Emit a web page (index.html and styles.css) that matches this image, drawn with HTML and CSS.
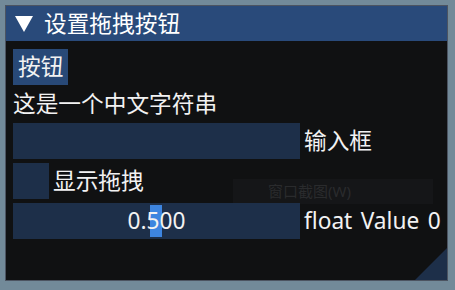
FILE: index.html
```html
<!DOCTYPE html>
<html lang="zh-CN">
<head>
<meta charset="utf-8">
<title>设置拖拽按钮</title>
<link rel="stylesheet" href="styles.css">
</head>
<body>
<div class="window">
  <div class="titlebar">
    <span class="arrow"></span>
    <span class="title">设置拖拽按钮</span>
  </div>
  <div class="content">
    <div class="row"><div class="button">按钮</div></div>
    <div class="row text">这是一个中文字符串</div>
    <div class="row"><div class="frame wide"></div><span class="label">输入框</span></div>
    <div class="row"><div class="frame check"></div><span class="label">显示拖拽</span></div>
    <div class="row slider-row">
      <div class="frame wide slider">
        <div class="grab" style="left:137px"></div>
        <span class="value">0.500</span>
      </div>
      <span class="label latin">float Value 0</span>
    </div>
  </div>
  <div class="ghost"><span>窗口截图(W)</span></div>
  <div class="grip"></div>
</div>
</body>
</html>
```
FILE: styles.css
```css
html, body {
  margin: 0;
  padding: 0;
  background: #728a99;
  width: 455px;
  height: 290px;
  overflow: hidden;
}
body {
  font-family: "Noto Sans", "Noto Sans CJK SC", sans-serif;
  color: #f2f2f2;
  font-size: 22.7px;
}
.window {
  position: relative;
  margin: 5px 0 0 5px;
  width: 443px;
  height: 276px;
  box-sizing: border-box;
  border: 1px solid #4c5461;
  background: #101112;
}
.titlebar {
  height: 35px;
  background: #294a7a;
  display: flex;
  align-items: center;
  padding-left: 9px;
}
.arrow {
  width: 0;
  height: 0;
  border-left: 9.5px solid transparent;
  border-right: 9.5px solid transparent;
  border-top: 16px solid #ffffff;
  margin-right: 11px;
  margin-top: 1px;
}
.title {
  line-height: 35px;
  color: #ffffff;
}
.content {
  padding: 8px 7px;
  display: flex;
  flex-direction: column;
  gap: 4px;
}
.row {
  display: flex;
  align-items: center;
  gap: 4px;
}
.text {
  height: 30px;
  line-height: 30px;
}
.button {
  height: 36px;
  line-height: 36px;
  padding: 0 5px;
  background: #284977;
}
.frame {
  height: 36px;
  background: #1d2f49;
  flex-shrink: 0;
}
.wide {
  width: 287px;
}
.check {
  width: 36px;
}
.label {
  line-height: 36px;
  white-space: nowrap;
  flex-shrink: 0;
}
.latin {
  word-spacing: 2.5px;
}
.slider-row {
  position: relative;
  z-index: 1;
}
.slider {
  position: relative;
  display: flex;
  justify-content: center;
  align-items: center;
}
.grab {
  position: absolute;
  top: 2px;
  width: 12px;
  height: 32px;
  background: #3d85e0;
}
.value {
  position: relative;
  line-height: 36px;
}
.ghost {
  position: absolute;
  left: 227px;
  top: 173px;
  width: 200px;
  height: 25px;
  background: #151618;
  color: #2a2b2d;
  font-size: 15px;
  line-height: 25px;
  padding-left: 35px;
  box-sizing: border-box;
}
.grip {
  position: absolute;
  right: 0;
  bottom: 0;
  width: 32px;
  height: 32px;
  background: #1d2f49;
  clip-path: polygon(100% 0, 100% 100%, 0 100%);
}
```
